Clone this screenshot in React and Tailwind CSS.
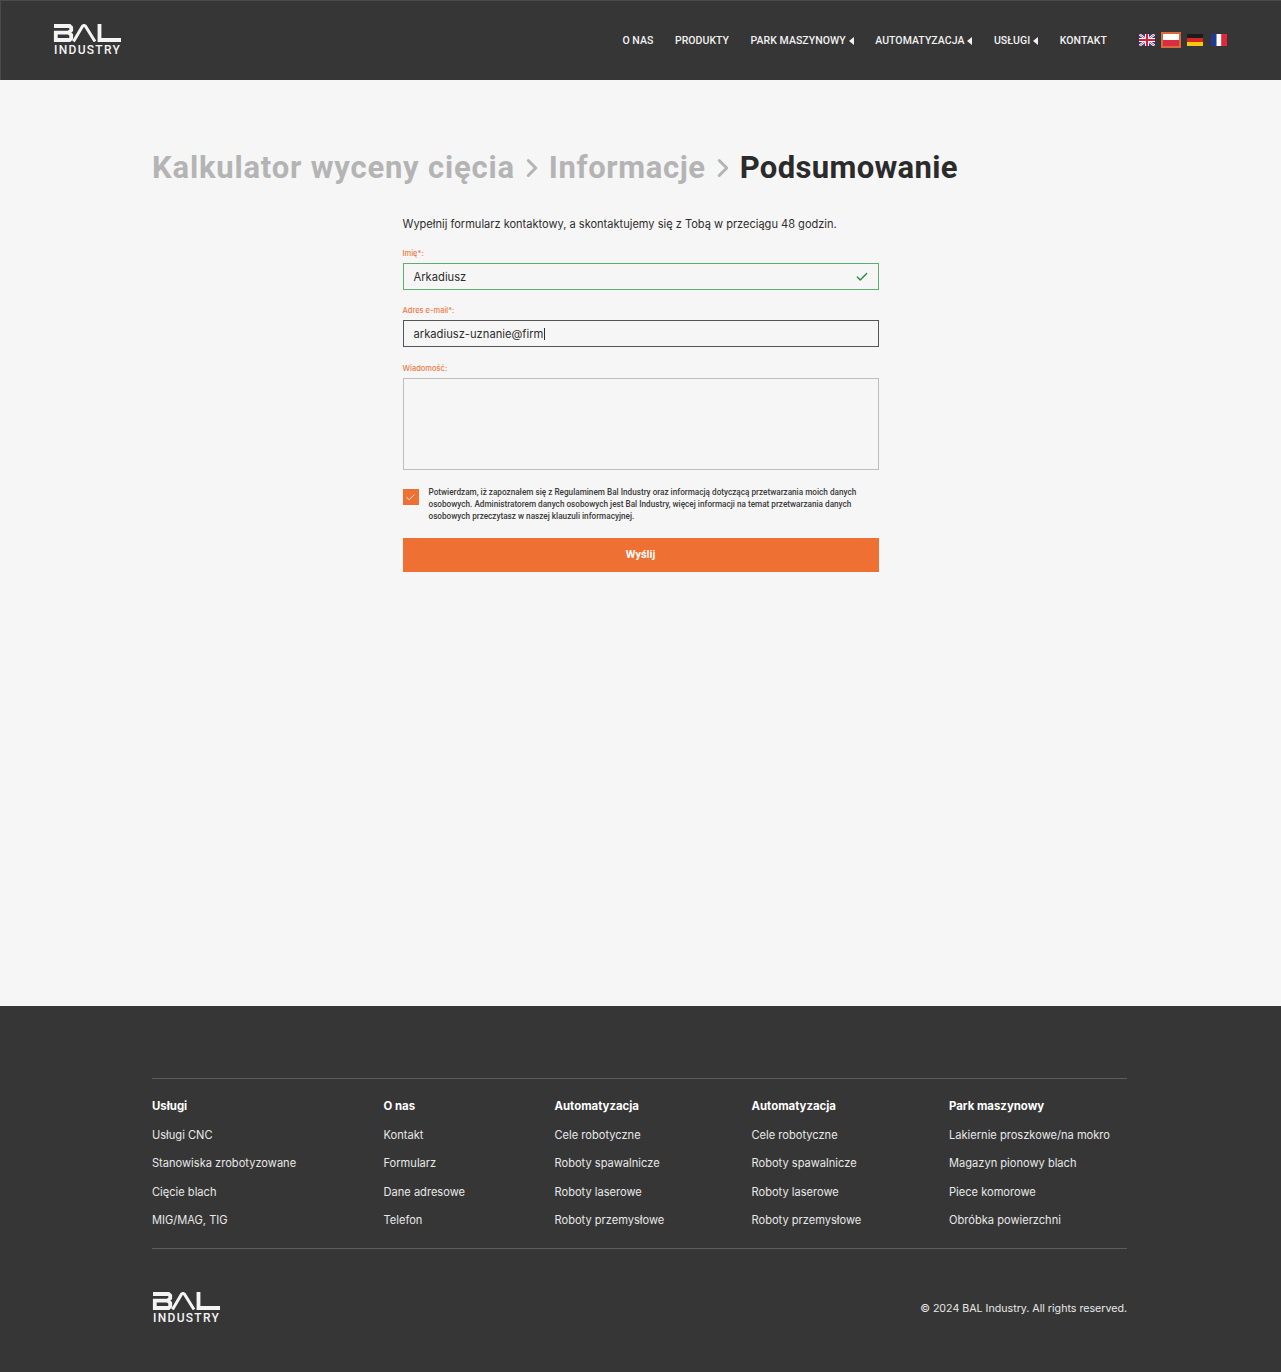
import { Check, ChevronRight } from 'lucide-react';

const sans = "font-['Inter','Liberation_Sans',sans-serif]";
const tech = "font-['Roboto','Liberation_Sans',sans-serif]";

const navItems = [
  { label: 'O NAS' },
  { label: 'PRODUKTY' },
  { label: 'PARK MASZYNOWY', arrow: true },
  { label: 'AUTOMATYZACJA', arrow: true },
  { label: 'USŁUGI', arrow: true },
  { label: 'KONTAKT' },
];

const footerColumns = [
  { title: 'Usługi', links: ['Usługi CNC', 'Stanowiska zrobotyzowane', 'Cięcie blach', 'MIG/MAG, TIG'] },
  { title: 'O nas', links: ['Kontakt', 'Formularz', 'Dane adresowe', 'Telefon'] },
  { title: 'Automatyzacja', links: ['Cele robotyczne', 'Roboty spawalnicze', 'Roboty laserowe', 'Roboty przemysłowe'] },
  { title: 'Automatyzacja', links: ['Cele robotyczne', 'Roboty spawalnicze', 'Roboty laserowe', 'Roboty przemysłowe'] },
  { title: 'Park maszynowy', links: ['Lakiernie proszkowe/na mokro', 'Magazyn pionowy blach', 'Piece komorowe', 'Obróbka powierzchni'] },
];

const Logo = () => (
  <div className="flex w-[68px] flex-col">
    <svg width="68" height="18" viewBox="0 0 68 18" fill="none" aria-label="BAL" className="-mt-[1px] block">
      <path d="M1 2H16.5L18.2 3.6V6.2L15.8 8.6H2.8V16H16.5L18.2 14.4V11L15.8 8.6" stroke="#f4f4f4" strokeWidth="3.8" />
      <path d="M20.5 17.5L29.5 2.2Q31 0.8 32.5 2.2L42 17.5" stroke="#f4f4f4" strokeWidth="3" />
      <path d="M46.5 0V16H68" stroke="#f4f4f4" strokeWidth="3.8" />
    </svg>
    <span className={`mt-[3px] pl-[1px] text-[12px] leading-[11px] font-medium tracking-[1.3px] whitespace-nowrap text-[#f4f4f4] ${tech}`}>INDUSTRY</span>
  </div>
);

const Flag = ({ children, active }) => (
  <svg width="16" height="12" viewBox="0 0 16 12" className={active ? 'block outline-2 outline-[#d9693a]' : 'block'}>
    {children}
  </svg>
);

const Flags = () => (
  <div className="ml-8 flex -translate-y-[1px] items-center gap-2">
    <Flag>
      <rect width="16" height="12" fill="#2b3f87" />
      <path d="M0 0L16 12M16 0L0 12" stroke="#fff" strokeWidth="2.4" />
      <path d="M0 0L16 12M16 0L0 12" stroke="#d3213d" strokeWidth="0.8" />
      <path d="M8 0V12M0 6H16" stroke="#fff" strokeWidth="4" />
      <path d="M8 0V12M0 6H16" stroke="#d3213d" strokeWidth="2.2" />
    </Flag>
    <Flag active>
      <rect width="16" height="6" fill="#fff" />
      <rect y="6" width="16" height="6" fill="#dc2c44" />
    </Flag>
    <Flag>
      <rect width="16" height="4" fill="#1c1c1c" />
      <rect y="4" width="16" height="4" fill="#d8261c" />
      <rect y="8" width="16" height="4" fill="#f8c715" />
    </Flag>
    <Flag>
      <rect width="5.5" height="12" fill="#1f3a93" />
      <rect x="5.5" width="5" height="12" fill="#fff" />
      <rect x="10.5" width="5.5" height="12" fill="#e3263a" />
    </Flag>
  </div>
);

const Header = () => (
  <header className="flex h-20 items-center justify-between border-l border-t border-[#4a4a4a] bg-[#363636] pr-[54px] pl-[52px]">
    <Logo />
    <div className="flex items-center">
      <nav className="flex items-center gap-[21.5px]">
        {navItems.map((item) => (
          <a key={item.label} className={`flex items-center gap-[3px] text-[10.5px] font-medium tracking-[0.05px] text-[#f1f1f1] ${tech}`}>
            {item.label}
            {item.arrow && <span className="h-0 w-0 border-y-[4px] border-r-[5px] border-y-transparent border-r-[#f1f1f1]" />}
          </a>
        ))}
      </nav>
      <Flags />
    </div>
  </header>
);

const Breadcrumb = () => (
  <h1 className={`flex items-center text-[31px] leading-[36px] font-bold whitespace-nowrap text-[#b4b4b4] ${tech}`}>
    <span className="tracking-[0.8px]">Kalkulator wyceny cięcia</span>
    <ChevronRight size={30} strokeWidth={2.4} className="mx-[2px]" />
    <span className="tracking-[0.6px]">Informacje</span>
    <ChevronRight size={30} strokeWidth={2.4} className="mx-[2px]" />
    <span className="tracking-[0.35px] text-[#2b2b2b]">Podsumowanie</span>
  </h1>
);

const Label = ({ children }) => (
  <label className={`mb-[4px] block text-[7.5px] leading-[10px] font-medium text-[#ee7a45] ${sans}`}>{children}</label>
);

const ContactForm = () => (
  <form className={`mx-auto mt-[30px] w-[476px] ${sans}`}>
    <p className="text-[11.05px] leading-[16px] text-[#2e2e2e]">
      Wypełnij formularz kontaktowy, a skontaktujemy się z Tobą w przeciągu 48 godzin.
    </p>
    <div className="mt-[17px]">
      <Label>Imię*:</Label>
      <div className="flex h-[27px] items-center justify-between border border-[#5fae70] pr-[9px] pl-[10px] text-[11.2px] text-[#2e2e2e]">
        <span className="pt-[1px]">Arkadiusz</span>
        <Check size={14} strokeWidth={2.4} className="text-[#2c8a3f]" />
      </div>
    </div>
    <div className="mt-[16px]">
      <Label>Adres e-mail*:</Label>
      <div className="flex h-[27px] items-center border border-[#555555] px-[10px] text-[11.2px] text-[#2e2e2e]">
        <span className="pt-[1px]">arkadiusz-uznanie@firm</span>
        <span className="ml-[1px] h-[12px] w-px bg-[#2e2e2e]" />
      </div>
    </div>
    <div className="mt-[17px]">
      <Label>Wiadomość:</Label>
      <div className="h-[92px] border border-[#bdbdbd]" />
    </div>
    <div className="mt-[16px] flex items-start">
      <span className="mt-[3px] flex h-4 w-4 shrink-0 items-center justify-center bg-[#ef7033]">
        <Check size={11} strokeWidth={2} className="text-white" />
      </span>
      <p className={`ml-[10px] text-[8.2px] leading-[12px] font-medium text-[#3a3a3a] ${tech}`}>
        Potwierdzam, iż zapoznałem się z Regulaminem Bal Industry oraz informacją dotyczącą przetwarzania moich danych
        osobowych. Administratorem danych osobowych jest Bal Industry, więcej informacji na temat przetwarzania danych
        osobowych przeczytasz w naszej klauzuli informacyjnej.
      </p>
    </div>
    <button type="button" className={`mt-[16px] h-[34px] w-full bg-[#ef7033] pt-[1px] text-[11px] font-bold text-white ${tech}`}>
      Wyślij
    </button>
  </form>
);

const Footer = () => (
  <footer className={`h-[366px] bg-[#363636] pt-[72px] pr-[154px] pl-[152px] ${sans}`}>
    <div className="grid grid-cols-[231.5px_171px_197px_197.5px_1fr] border-y border-[#5c5c5c] pt-[18px] pb-[19px]">
      {footerColumns.map((col, i) => (
        <div key={i} className="flex flex-col gap-[10.6px]">
          <h3 className="text-[11.4px] leading-[18px] font-bold text-white">{col.title}</h3>
          {col.links.map((link) => (
            <a key={link} className="text-[11.1px] leading-[18px] whitespace-nowrap text-[#e8e8e8]">{link}</a>
          ))}
        </div>
      ))}
    </div>
    <div className="mt-[44px] flex items-center justify-between">
      <Logo />
      <p className="text-[10.65px] text-[#e8e8e8]">© 2024 BAL Industry. All rights reserved.</p>
    </div>
  </footer>
);

export default function App() {
  return (
    <div className="min-h-[1372px] bg-[#f6f6f6]">
      <Header />
      <main className="h-[926px] px-[152px] pt-[70px]">
        <Breadcrumb />
        <ContactForm />
      </main>
      <Footer />
    </div>
  );
}
